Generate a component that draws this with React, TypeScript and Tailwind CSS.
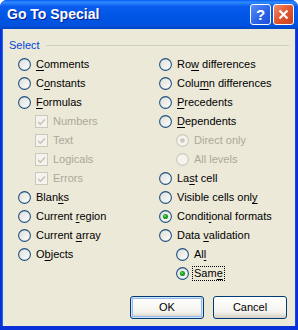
import React from "react";

type Opt = {
  label: string;
  u?: number; // index of accelerator letter
  kind: "radio" | "check";
  indent?: boolean;
  checked?: boolean;
  disabled?: boolean;
  focus?: boolean;
};

const left: Opt[] = [
  { label: "Comments", u: 0, kind: "radio" },
  { label: "Constants", u: 1, kind: "radio" },
  { label: "Formulas", u: 0, kind: "radio" },
  { label: "Numbers", kind: "check", indent: true, checked: true, disabled: true },
  { label: "Text", kind: "check", indent: true, checked: true, disabled: true },
  { label: "Logicals", kind: "check", indent: true, checked: true, disabled: true },
  { label: "Errors", kind: "check", indent: true, checked: true, disabled: true },
  { label: "Blanks", u: 4, kind: "radio" },
  { label: "Current region", u: 8, kind: "radio" },
  { label: "Current array", u: 8, kind: "radio" },
  { label: "Objects", u: 1, kind: "radio" },
];

const right: Opt[] = [
  { label: "Row differences", u: 2, kind: "radio" },
  { label: "Column differences", u: 4, kind: "radio" },
  { label: "Precedents", u: 0, kind: "radio" },
  { label: "Dependents", u: 0, kind: "radio" },
  { label: "Direct only", kind: "radio", indent: true, checked: true, disabled: true },
  { label: "All levels", kind: "radio", indent: true, disabled: true },
  { label: "Last cell", u: 2, kind: "radio" },
  { label: "Visible cells only", u: 17, kind: "radio" },
  { label: "Conditional formats", u: 6, kind: "radio", checked: true },
  { label: "Data validation", u: 5, kind: "radio" },
  { label: "All", u: 2, kind: "radio", indent: true },
  { label: "Same", u: 3, kind: "radio", indent: true, checked: true, focus: true },
];

function Radio({ checked, disabled }: { checked?: boolean; disabled?: boolean }) {
  return (
    <svg width="13" height="13" viewBox="0 0 13 13" className="shrink-0">
      <circle
        cx="6.5"
        cy="6.5"
        r="5.9"
        fill={disabled ? "#F4F3EE" : "url(#rgrad)"}
        stroke={disabled ? "#CAC8BB" : "#1C5180"}
        strokeWidth="1.1"
      />
      {checked &&
        (disabled ? (
          <circle cx="6.5" cy="6.5" r="2.3" fill="#CAC8BB" />
        ) : (
          <>
            <circle cx="6.5" cy="6.5" r="2.6" fill="#21A121" />
            <circle cx="6" cy="6" r="1.1" fill="#5FD35F" />
          </>
        ))}
    </svg>
  );
}

function Check({ disabled }: { disabled?: boolean }) {
  return (
    <svg width="13" height="13" viewBox="0 0 13 13" className="shrink-0">
      <rect x="0.5" y="0.5" width="12" height="12" fill={disabled ? "#F4F3EE" : "#fff"} stroke="#CAC8BB" />
      <path d="M3 6 L5.3 8.3 L10 3.6 L10 5.6 L5.3 10.3 L3 8 Z" fill="#C2C0B2" />
    </svg>
  );
}

function Label({ text, u }: { text: string; u?: number }) {
  if (u === undefined) return <>{text}</>;
  return (
    <>
      {text.slice(0, u)}
      <span className="underline underline-offset-[2px]">{text[u]}</span>
      {text.slice(u + 1)}
    </>
  );
}

function Row({ o }: { o: Opt }) {
  return (
    <div className={`flex h-[19px] items-center gap-[4px] ${o.indent ? "pl-[17px]" : ""}`}>
      {o.kind === "radio" ? <Radio checked={o.checked} disabled={o.disabled} /> : <Check disabled={o.disabled} />}
      <span
        className={`leading-[13px] whitespace-nowrap px-[1px] ${o.disabled ? "text-[#ACA899]" : "text-black"} ${
          o.focus ? "outline outline-1 outline-dotted outline-black" : ""
        }`}
      >
        <Label text={o.label} u={o.u} />
      </span>
    </div>
  );
}

function XpButton({ children, isDefault }: { children: React.ReactNode; isDefault?: boolean }) {
  return (
    <button
      className={`h-[23px] w-[74px] rounded-[3px] border border-[#003C74] bg-[linear-gradient(#FFFFFF,#F4F3EE_70%,#D6D0C5)] text-[11px] text-black ${
        isDefault ? "shadow-[inset_0_0_0_1px_#CEE7FF,inset_0_0_0_2px_#98B8EA]" : ""
      }`}
    >
      {children}
    </button>
  );
}

export default function App() {
  return (
    <div className="w-[298px] h-[330px] bg-white font-['Liberation_Sans',Arial,sans-serif] text-[11px]">
      <svg width="0" height="0" className="absolute">
        <defs>
          <linearGradient id="rgrad" x1="0" y1="0" x2="1" y2="1">
            <stop offset="0" stopColor="#DCDCD7" />
            <stop offset="1" stopColor="#FFFFFF" />
          </linearGradient>
        </defs>
      </svg>
      <div className="flex h-full flex-col overflow-hidden rounded-t-[7px] bg-[#0831D9]">
        {/* title bar */}
        <div className="flex h-[29px] shrink-0 items-center justify-between bg-[linear-gradient(#0A5FF4,#2E8BFF_8%,#0A5CEE_22%,#0055E5_60%,#0053E0_85%,#0046C8)] pl-[7px] pr-[4px]">
          <span className="text-[14px] font-bold text-white [text-shadow:1px_1px_#0B1E8C]">Go To Special</span>
          <div className="flex gap-[2px]">
            <div className="flex h-[21px] w-[21px] items-center justify-center rounded-[3px] border border-white bg-[linear-gradient(135deg,#5A8BF8,#2763E8_60%,#1D4FD6)] text-[15px] font-bold leading-none text-white">
              ?
            </div>
            <div className="flex h-[21px] w-[21px] items-center justify-center rounded-[3px] border border-white bg-[linear-gradient(135deg,#F08C6A,#E2562F_50%,#C6401F)]">
              <svg width="11" height="11" viewBox="0 0 11 11">
                <path d="M1.5 1.5 L9.5 9.5 M9.5 1.5 L1.5 9.5" stroke="#fff" strokeWidth="2.2" />
              </svg>
            </div>
          </div>
        </div>
        {/* body */}
        <div className="mx-[3px] mb-[4px] flex flex-1 flex-col bg-[#ECE9D8] shadow-[-1px_0_0_#166AEE,1px_0_0_#0B4BDF]">
          <div className="flex items-center gap-[6px] pl-[6px] pr-[6px] pt-[7px] h-[26px]">
            <span className="text-[#0046D5] leading-[13px]">Select</span>
            <div className="h-px flex-1 bg-[#D0D0BF]" />
          </div>
          <div className="grid grid-cols-[141px_1fr] pl-[15px]">
            <div className="flex flex-col">
              {left.map((o) => (
                <Row key={o.label} o={o} />
              ))}
            </div>
            <div className="flex flex-col">
              {right.map((o, i) => (
                <Row key={o.label + i} o={o} />
              ))}
            </div>
          </div>
          <div className="mt-[13px] flex justify-end gap-[9px] pr-[8px]">
            <XpButton isDefault>OK</XpButton>
            <XpButton>Cancel</XpButton>
          </div>
        </div>
      </div>
    </div>
  );
}
